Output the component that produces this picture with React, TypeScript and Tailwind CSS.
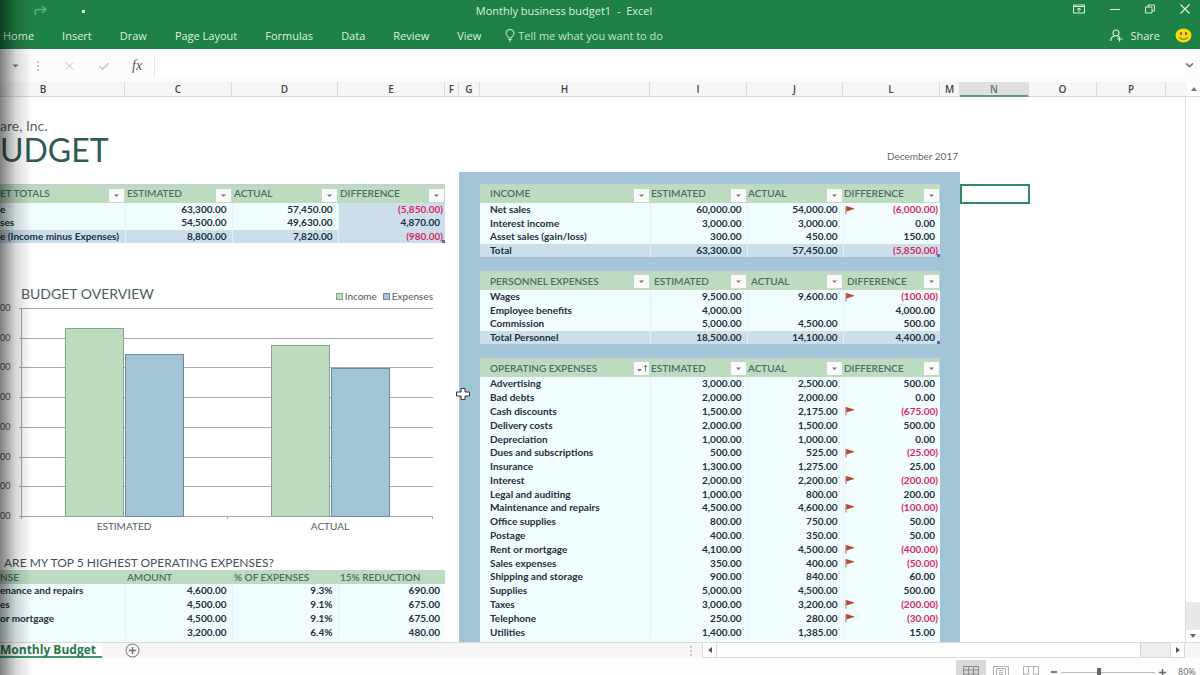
import clsx from "clsx";

type Row = { label: string; cells: string[]; flag?: boolean; total?: boolean };

const tabs = ["Home", "Insert", "Draw", "Page Layout", "Formulas", "Data", "Review", "View"];

const columns = [
    { name: "B", width: "w-[125px] pr-[38px]" },
    { name: "C", width: "w-[107px]" },
    { name: "D", width: "w-[106px]" },
    { name: "E", width: "w-[107px]" },
    { name: "F", width: "w-[14px]" },
    { name: "G", width: "w-[21px]" },
    { name: "H", width: "w-[170px]" },
    { name: "I", width: "w-[97px]" },
    { name: "J", width: "w-[96px]" },
    { name: "L", width: "w-[97px]" },
    { name: "M", width: "w-5" },
    { name: "N", width: "w-[69px]" },
    { name: "O", width: "w-[68px]" },
    { name: "P", width: "w-[69px]" },
];

const totals: Row[] = [
    { label: "e", cells: ["63,300.00", "57,450.00", "(5,850.00)"] },
    { label: "ses", cells: ["54,500.00", "49,630.00", "4,870.00"] },
    { label: "e (Income minus Expenses)", cells: ["8,800.00", "7,820.00", "(980.00)"], total: true },
];

const topExpenses: Row[] = [
    { label: "enance and repairs", cells: ["4,600.00", "9.3%", "690.00"] },
    { label: "es", cells: ["4,500.00", "9.1%", "675.00"] },
    { label: "or mortgage", cells: ["4,500.00", "9.1%", "675.00"] },
    { label: "", cells: ["3,200.00", "6.4%", "480.00"] },
];

const income: Row[] = [
    { label: "Net sales", cells: ["60,000.00", "54,000.00", "(6,000.00)"], flag: true },
    { label: "Interest income", cells: ["3,000.00", "3,000.00", "0.00"] },
    { label: "Asset sales (gain/loss)", cells: ["300.00", "450.00", "150.00"] },
    { label: "Total", cells: ["63,300.00", "57,450.00", "(5,850.00)"], total: true },
];

const personnel: Row[] = [
    { label: "Wages", cells: ["9,500.00", "9,600.00", "(100.00)"], flag: true },
    { label: "Employee benefits", cells: ["4,000.00", "", "4,000.00"] },
    { label: "Commission", cells: ["5,000.00", "4,500.00", "500.00"] },
    { label: "Total Personnel", cells: ["18,500.00", "14,100.00", "4,400.00"], total: true },
];

const operating: Row[] = [
    { label: "Advertising", cells: ["3,000.00", "2,500.00", "500.00"] },
    { label: "Bad debts", cells: ["2,000.00", "2,000.00", "0.00"] },
    { label: "Cash discounts", cells: ["1,500.00", "2,175.00", "(675.00)"], flag: true },
    { label: "Delivery costs", cells: ["2,000.00", "1,500.00", "500.00"] },
    { label: "Depreciation", cells: ["1,000.00", "1,000.00", "0.00"] },
    { label: "Dues and subscriptions", cells: ["500.00", "525.00", "(25.00)"], flag: true },
    { label: "Insurance", cells: ["1,300.00", "1,275.00", "25.00"] },
    { label: "Interest", cells: ["2,000.00", "2,200.00", "(200.00)"], flag: true },
    { label: "Legal and auditing", cells: ["1,000.00", "800.00", "200.00"] },
    { label: "Maintenance and repairs", cells: ["4,500.00", "4,600.00", "(100.00)"], flag: true },
    { label: "Office supplies", cells: ["800.00", "750.00", "50.00"] },
    { label: "Postage", cells: ["400.00", "350.00", "50.00"] },
    { label: "Rent or mortgage", cells: ["4,100.00", "4,500.00", "(400.00)"], flag: true },
    { label: "Sales expenses", cells: ["350.00", "400.00", "(50.00)"], flag: true },
    { label: "Shipping and storage", cells: ["900.00", "840.00", "60.00"] },
    { label: "Supplies", cells: ["5,000.00", "4,500.00", "500.00"] },
    { label: "Taxes", cells: ["3,000.00", "3,200.00", "(200.00)"], flag: true },
    { label: "Telephone", cells: ["250.00", "280.00", "(30.00)"], flag: true },
    { label: "Utilities", cells: ["1,400.00", "1,385.00", "15.00"] },
];

function Flag() {
    return (
        <svg viewBox="0 0 10 10" className="h-[10px] w-[10px]" aria-hidden="true">
            <path d="M1 1v8.5" stroke="#8a8a90" strokeWidth="1.2" />
            <path d="M1.4 1l8 2.8-8 2.8z" fill="#d8352f" />
            <path d="M6 2.6l3.4 1.2L6 5z" fill="#6b7a2e" />
        </svg>
    );
}

function FilterButton({ name, sorted }: { name: string; sorted?: boolean }) {
    return (
        <button type="button" aria-label={`Filter ${name}`} className="mr-px flex h-[13px] w-[15px] shrink-0 items-center justify-center bg-[#fafafc]">
            <svg viewBox="0 0 15 13" className="h-[13px] w-[15px]" aria-hidden="true">
                {sorted ? (
                    <>
                        <path d="M3 7h5L5.500 9.500z" fill="#777" />
                        <path d="M11.500 9.500V3.500M10 5l1.500-1.700L13 5" stroke="#777" fill="none" />
                    </>
                ) : (
                    <path d="M5 5.500h5L7.500 8z" fill="#777" />
                )}
            </svg>
        </button>
    );
}

type TableProps = {
    head: string[];
    rows: Row[];
    left?: boolean;
    filters?: boolean;
    sorted?: boolean;
    inset?: boolean;
    lowHead?: boolean;
    shadeLast?: boolean;
    handle?: boolean;
    className?: string;
};

function BudgetTable({ head, rows, left, filters = true, sorted, inset, lowHead, shadeLast, handle, className }: TableProps) {
    return (
        <div className="relative">
            <table className={clsx("w-full table-fixed border-collapse text-[10px] leading-[13px] text-[#20303c]", className)}>
                <colgroup>
                    <col className={left ? "w-[125px]" : "w-[170px]"} />
                    <col className={left ? "w-[107px]" : "w-[97px]"} />
                    <col className={left ? "w-[106px]" : "w-[96px]"} />
                    <col className={left ? "w-[107px]" : "w-[97px]"} />
                </colgroup>
                <thead>
                    <tr className={clsx("bg-[#bddbbe] text-[#4d6e66]", filters ? "h-[18px]" : "h-[14px]")}>
                        {head.map((name, i) => (
                            <th
                                key={name}
                                scope="col"
                                className={clsx("p-0 text-left font-semibold", filters && "border-t-2 border-t-[#c3d3c6]")}
                            >
                                <div
                                    className={clsx(
                                        "flex justify-between",
                                        lowHead ? "items-end" : "items-start",
                                        i === 0 ? !left && "pl-[10px]" : inset ? "pl-1" : left ? "pl-0.5" : "pl-px",
                                    )}
                                >
                                    <span className="whitespace-nowrap">{name}</span>
                                    {filters && (
                                        <span className={clsx("flex", !lowHead && "pt-0.5")}>
                                            <FilterButton name={name} sorted={sorted && i === 0} />
                                        </span>
                                    )}
                                </div>
                            </th>
                        ))}
                    </tr>
                </thead>
                <tbody>
                    {rows.map((row) => (
                        <tr key={row.label} className={row.total ? "bg-[#cbdeea]" : "bg-[#f1fcff]"}>
                            <th scope="row" className={clsx("whitespace-nowrap p-0 text-left font-bold", !left && "pl-[10px]")}>
                                {row.label}
                            </th>
                            {row.cells.map((cell, i) => {
                                const negative = cell.startsWith("(");
                                return (
                                    <td
                                        key={i}
                                        className={clsx(
                                            "border-l border-l-[#e4f1f6] py-0 pl-px font-bold",
                                            negative ? "pr-0.5 text-[#d8275f]" : "pr-[5px]",
                                            shadeLast && i === 2 && "bg-[#cbdeea]",
                                        )}
                                    >
                                        <div className="flex items-center justify-between">
                                            <span>{row.flag && i === 2 && <Flag />}</span>
                                            <span>{cell}</span>
                                        </div>
                                    </td>
                                );
                            })}
                        </tr>
                    ))}
                </tbody>
            </table>
            {handle && <span className="absolute bottom-0 right-0 h-[3px] w-[3px] bg-[#6a62ae]" />}
        </div>
    );
}

// y positions are measured from the top grid line
const bars = [
    { x: 47, y: 20, fill: "#bddbbe", stroke: "#86a58c" },
    { x: 107, y: 46, fill: "#a2c4d7", stroke: "#6d8898" },
    { x: 253, y: 37, fill: "#bddbbe", stroke: "#86a58c" },
    { x: 313, y: 60, fill: "#a2c4d7", stroke: "#6d8898" },
];
const gridLines = [0, 30, 59, 89, 119, 149, 178, 208];

function Chart() {
    return (
        <section aria-label="Budget overview" className="text-[#4f5b60]">
            <div className="flex items-end justify-between pl-[21px] pr-3">
                <h2 className="text-[14px] leading-4 text-[#47605e]">BUDGET OVERVIEW</h2>
                <div className="flex gap-1.5 text-[10px] leading-3">
                    <span className="flex items-center gap-0.5">
                        <i className="h-[7px] w-[7px] border border-[#86a58c] bg-[#bddbbe]" />
                        Income
                    </span>
                    <span className="flex items-center gap-0.5">
                        <i className="h-[7px] w-[7px] border border-[#6d8898] bg-[#a2c4d7]" />
                        Expenses
                    </span>
                </div>
            </div>
            <div className="flex pt-px">
                <div className="flex h-[218px] w-[18px] flex-col justify-between text-[9px] leading-[10px]">
                    {gridLines.map((y) => (
                        <span key={y}>00</span>
                    ))}
                </div>
                <svg viewBox="0 0 416 218" className="h-[218px] w-[416px]" aria-hidden="true">
                    <g transform="translate(0 5)" shapeRendering="crispEdges">
                        {gridLines.map((y) => (
                            <path key={y} d={`M1 ${y + 0.5}H415`} stroke="#a5a7a9" />
                        ))}
                        <path d="M3.500 0V211M209.500 208v3M414.500 208v3" stroke="#a5a7a9" />
                        {bars.map((bar) => (
                            <rect key={bar.x} x={bar.x + 0.5} y={bar.y + 0.5} width="58" height={208 - bar.y} fill={bar.fill} stroke={bar.stroke} />
                        ))}
                    </g>
                </svg>
            </div>
            <div className="ml-[21px] grid w-[412px] grid-cols-2 text-center text-[10px] leading-[10px]">
                <span>ESTIMATED</span>
                <span>ACTUAL</span>
            </div>
        </section>
    );
}

function TitleBar() {
    return (
        <header className="shrink-0 bg-[#1e8145] font-['Open_Sans',sans-serif] text-[#dcefe2]">
            <div className="grid h-[22px] grid-cols-[1fr_auto_1fr] items-center">
                <div className="flex items-center gap-[35px] pl-[33px]">
                    <button type="button" aria-label="Redo">
                        <svg viewBox="0 0 14 12" className="h-3 w-3.5 opacity-40" fill="none" stroke="currentColor" strokeWidth="1.500">
                            <path d="M9 1l4 3.500L9 8M12.500 4.500H5C2 4.500 1 7 3 10" />
                        </svg>
                    </button>
                    <button type="button" aria-label="Customize toolbar" className="h-[3px] w-[3px] bg-[#cfe8d8]" />
                </div>
                <h1 className="whitespace-pre pr-[72px] text-[11px] font-medium leading-[22px]">Monthly business budget1  -  Excel</h1>
                <div className="flex items-center justify-end gap-[25px] pb-1 pr-[10px]">
                    <button type="button" aria-label="Ribbon display options">
                        <svg viewBox="0 0 12 10" className="h-2.5 w-3" fill="none" stroke="currentColor">
                            <path d="M.5 1h11v8H.5zM.5 2.500h11M6 8V4M4 5.800L6 4l2 1.800" />
                        </svg>
                    </button>
                    <button type="button" aria-label="Minimize">
                        <svg viewBox="0 0 10 10" className="h-2.5 w-2.5" stroke="currentColor">
                            <path d="M0 5.500h10" />
                        </svg>
                    </button>
                    <button type="button" aria-label="Restore">
                        <svg viewBox="0 0 10 10" className="h-2.5 w-2.5" fill="none" stroke="currentColor">
                            <path d="M.5 3h6.500v6H.5zM3 3V1h6.500v6H7" />
                        </svg>
                    </button>
                    <button type="button" aria-label="Close">
                        <svg viewBox="0 0 10 10" className="h-2.5 w-2.5" stroke="currentColor" strokeWidth="1.200">
                            <path d="M.5.5l9 9M9.500.5l-9 9" />
                        </svg>
                    </button>
                </div>
            </div>
            <nav aria-label="Ribbon" className="flex h-[27px] items-center text-[11px] font-medium leading-4">
                <div className="flex gap-7 pl-[3px]">
                    {tabs.map((tab) => (
                        <button key={tab} type="button" className="whitespace-nowrap">
                            {tab}
                        </button>
                    ))}
                </div>
                <label className="flex flex-1 items-center gap-[3px] pl-6">
                    <svg viewBox="0 0 10 13" className="h-[13px] w-2.5 shrink-0" fill="none" stroke="currentColor">
                        <path d="M3.500 9C3.500 7.500 1 6.500 1 4a4 3.500 0 0 1 8 0c0 2.500-2.500 3.500-2.500 5zM3.500 10.500h3M4 12h2" />
                    </svg>
                    <input
                        aria-label="Tell me"
                        placeholder="Tell me what you want to do"
                        className="w-full bg-transparent outline-none placeholder:text-[#c3e2ce]"
                    />
                </label>
                <button type="button" className="flex items-center gap-[7px]">
                    <svg viewBox="0 0 13 13" className="h-[13px] w-[13px]" fill="none" stroke="currentColor" strokeWidth="1.200">
                        <circle cx="6" cy="4" r="3" />
                        <path d="M.8 12c0-2.500 1.500-4.500 3.700-5M7.500 7l1.500 1M9.500 7.500v5M7 10h5.500" />
                    </svg>
                    Share
                </button>
                <button type="button" aria-label="Feedback" className="ml-[15px] mr-2">
                    <svg viewBox="0 0 17 15" className="h-[15px] w-[17px]">
                        <ellipse cx="8.500" cy="7.500" rx="8" ry="7" fill="#f9d914" />
                        <ellipse cx="6" cy="5.500" rx=".9" ry="1.500" fill="#5b4a0c" />
                        <ellipse cx="11" cy="5.500" rx=".9" ry="1.500" fill="#5b4a0c" />
                        <path d="M4 9c1.500 3 7.500 3 9 0" fill="none" stroke="#7a5d0b" />
                    </svg>
                </button>
            </nav>
        </header>
    );
}

function FormulaBar() {
    return (
        <div className="flex h-[33px] shrink-0 items-center bg-[#fcfcfd] text-[#c4c4c4]">
            <button type="button" aria-label="Name box" className="ml-3">
                <svg viewBox="0 0 7 4" className="h-1 w-[7px]">
                    <path d="M.5.500h6L3.500 3.500z" fill="#777" />
                </svg>
            </button>
            <span className="ml-[18px] flex flex-col gap-0.5">
                <i className="h-0.5 w-0.5 bg-[#c4c4c4]" />
                <i className="h-0.5 w-0.5 bg-[#c4c4c4]" />
                <i className="h-0.5 w-0.5 bg-[#c4c4c4]" />
            </span>
            <button type="button" aria-label="Cancel" className="ml-[26px]">
                <svg viewBox="0 0 9 8" className="h-2 w-[9px]" stroke="currentColor">
                    <path d="M.5.500l8 7M8.500.500l-8 7" />
                </svg>
            </button>
            <button type="button" aria-label="Enter" className="ml-6">
                <svg viewBox="0 0 12 8" className="h-2 w-3" fill="none" stroke="currentColor" strokeWidth="1.400">
                    <path d="M1 4l3.500 3L11 1" />
                </svg>
            </button>
            <button type="button" className="ml-[22px] font-['Liberation_Serif',serif] text-[14px] italic leading-4 text-[#555]">
                fx
            </button>
            <input aria-label="Formula" className="ml-3 h-5 flex-1 border-l border-[#e4e4e6] bg-white outline-none" />
            <button type="button" aria-label="Expand formula bar" className="mr-1.5">
                <svg viewBox="0 0 9 5" className="h-[5px] w-[9px]" fill="none" stroke="#666" strokeWidth="1.500">
                    <path d="M1 .5l3.500 3 3.500-3" />
                </svg>
            </button>
        </div>
    );
}

function Footer() {
    return (
        <footer className="shrink-0">
            <div className="flex h-4 items-stretch border-t border-[#d5dcdf] bg-[#f6f6f7]">
                <button type="button" className="w-[102px] whitespace-nowrap border-b-2 border-[#3a9b68] bg-white text-left font-['Open_Sans',sans-serif] text-[12px] font-bold leading-[14px] text-[#217a4b]">
                    Monthly Budget
                </button>
                <button type="button" aria-label="New sheet" className="ml-[23px] flex items-center">
                    <svg viewBox="0 0 15 15" className="h-[15px] w-[15px]" fill="none" stroke="#777">
                        <circle cx="7.500" cy="7.500" r="6.500" />
                        <path d="M7.500 4v7M4 7.500h7" strokeWidth="1.500" />
                    </svg>
                </button>
                <span className="ml-auto mr-2.5 flex flex-col justify-center gap-0.5">
                    <i className="h-0.5 w-0.5 bg-[#c4c4c4]" />
                    <i className="h-0.5 w-0.5 bg-[#c4c4c4]" />
                    <i className="h-0.5 w-0.5 bg-[#c4c4c4]" />
                </span>
                <div className="mr-[15px] flex w-[483px] border-b border-[#dadada] bg-[#ededed]">
                    <button type="button" aria-label="Scroll left" className="flex w-[15px] items-center justify-center border-x border-[#dadada] bg-white">
                        <svg viewBox="0 0 4 6" className="h-1.5 w-1">
                            <path d="M4 0v6L0 3z" fill="#555" />
                        </svg>
                    </button>
                    <div className="flex-1 border-r border-[#d0d0d0] bg-white" />
                    <div className="w-[29px]" />
                    <button type="button" aria-label="Scroll right" className="flex w-[15px] items-center justify-center border-x border-[#dadada] bg-white">
                        <svg viewBox="0 0 4 6" className="h-1.5 w-1">
                            <path d="M0 0v6l4-3z" fill="#555" />
                        </svg>
                    </button>
                </div>
            </div>
            <div className="h-[17px] overflow-hidden bg-[#fdfdfd] pt-0.5">
                <div className="flex h-6 items-center justify-end text-[#666]">
                    <button type="button" aria-label="Normal view" className="flex h-6 w-[30px] items-center justify-center bg-[#d9d9d9]">
                        <svg viewBox="0 0 16 12" className="h-3 w-4" fill="none" stroke="#8c8c8c">
                            <path d="M.5.5h15v11H.5zM.5 4h15M.5 8h15M5.500.5v11M10.500.5v11" />
                        </svg>
                    </button>
                    <button type="button" aria-label="Page layout view" className="flex h-6 w-[30px] items-center justify-center">
                        <svg viewBox="0 0 16 12" className="h-3 w-4" fill="none" stroke="#b0b0b0">
                            <path d="M.5.5h15v11H.5zM3.500 12V2.500h9V12M6 4.500h4M6 6.500h4M6 8.500h4" />
                        </svg>
                    </button>
                    <button type="button" aria-label="Page break view" className="flex h-6 w-[30px] items-center justify-center">
                        <svg viewBox="0 0 16 12" className="h-3 w-4" fill="none" stroke="#b0b0b0">
                            <path d="M.5 12V.5h15V12M5.500.5V8H.5M10.500.5V8h5" />
                        </svg>
                    </button>
                    <button type="button" aria-label="Zoom out" className="ml-[5px] h-0.5 w-1.5 bg-[#777]" />
                    <input
                        type="range"
                        aria-label="Zoom"
                        min={0}
                        max={200}
                        defaultValue={80}
                        className="mx-1 h-2.5 w-[94px] appearance-none bg-transparent [&::-webkit-slider-runnable-track]:h-px [&::-webkit-slider-runnable-track]:bg-[#bbb] [&::-webkit-slider-thumb]:-mt-1 [&::-webkit-slider-thumb]:h-2.5 [&::-webkit-slider-thumb]:w-1 [&::-webkit-slider-thumb]:appearance-none [&::-webkit-slider-thumb]:bg-[#666]"
                    />
                    <button type="button" aria-label="Zoom in">
                        <svg viewBox="0 0 7 7" className="h-[7px] w-[7px]" stroke="#666" strokeWidth="1.500">
                            <path d="M3.500 0v7M0 3.500h7" />
                        </svg>
                    </button>
                    <span className="ml-3 mr-1 w-[18px] font-['Open_Sans',sans-serif] text-[9px] leading-3">80%</span>
                </div>
            </div>
        </footer>
    );
}

export default function App() {
    return (
        <div className="relative flex h-screen flex-col overflow-hidden bg-white font-['Lato',sans-serif]">
            <TitleBar />
            <FormulaBar />
            <div className="flex h-[15px] shrink-0 border-b border-[#d9d9d9] bg-[#f7f6f7] font-['Open_Sans',sans-serif] text-[10px] font-semibold leading-[14px] text-[#444]">
                {columns.map((column) => (
                    <div
                        key={column.name}
                        className={clsx(
                            "h-[15px] shrink-0 border-r border-[#dcdcdc] text-center",
                            column.name === "N" && "border-b-2 border-b-[#5a9f78] bg-[#dfdfdf] text-[#5c7567]",
                            column.width,
                        )}
                    >
                        {column.name}
                    </div>
                ))}
                <button type="button" aria-label="Scroll up" className="ml-auto flex w-[13px] items-center justify-center bg-white">
                    <svg viewBox="0 0 6 4" className="h-1 w-1.5">
                        <path d="M0 4h6L3 0z" fill="#777" />
                    </svg>
                </button>
            </div>

            <div className="flex min-h-0 flex-1">
                <main className="flex min-w-0 flex-1 overflow-hidden">
                    <div className="flex w-[445px] shrink-0 flex-col pt-[21px]">
                        <p className="text-[14px] leading-4 text-[#5b6668]">are, Inc.</p>
                        <p className="text-[32px] leading-8 text-[#2e5a58]">UDGET</p>
                        <div className="pt-[18px]">
                            <BudgetTable left shadeLast handle head={["ET TOTALS", "ESTIMATED", "ACTUAL", "DIFFERENCE"]} rows={totals} className="h-[59px]" />
                        </div>
                        <div className="pt-[43px]">
                            <Chart />
                        </div>
                        <h2 className="mt-[26px] whitespace-nowrap pl-1 text-[12px] leading-[12px] text-[#3f5352]">ARE MY TOP 5 HIGHEST OPERATING EXPENSES?</h2>
                        <div className="mt-px flex-1 bg-[#f1fcff]">
                            <BudgetTable left filters={false} head={["NSE", "AMOUNT", "% OF EXPENSES", "15% REDUCTION"]} rows={topExpenses} className="h-[69px]" />
                        </div>
                    </div>
                    <div className="ml-[14px] flex w-[501px] shrink-0 flex-col">
                        <p className="pt-[52px] pr-0.5 text-right text-[10px] leading-[14px] text-[#5f6b6e]">December 2017</p>
                        <div className="mt-[9px] flex flex-1 flex-col gap-[14px] bg-[#a2c4d7] pl-[21px] pr-5 pt-3">
                            <BudgetTable handle head={["INCOME", "ESTIMATED", "ACTUAL", "DIFFERENCE"]} rows={income} className="h-[73px]" />
                            <BudgetTable handle inset lowHead head={["PERSONNEL EXPENSES", "ESTIMATED", "ACTUAL", "DIFFERENCE"]} rows={personnel} className="h-[73px]" />
                            <div className="flex-1 bg-[#f1fcff]">
                                <BudgetTable sorted lowHead head={["OPERATING EXPENSES", "ESTIMATED", "ACTUAL", "DIFFERENCE"]} rows={operating} className="h-[281px]" />
                            </div>
                        </div>
                    </div>
                    <div className="mt-[87px] h-5 w-[70px] shrink-0 border-2 border-[#2f8a5c]" />
                </main>
                <div className="flex w-[15px] shrink-0 flex-col border-l border-[#dcdcdc] bg-white">
                    <div className="mt-auto h-7 bg-[#e8e8e8]" />
                    <button type="button" aria-label="Scroll down" className="flex h-3 items-center justify-center">
                        <svg viewBox="0 0 6 4" className="h-1 w-1.5">
                            <path d="M0 0h6L3 4z" fill="#666" />
                        </svg>
                    </button>
                </div>
            </div>
            <Footer />

            <svg viewBox="0 0 16 14" className="pointer-events-none absolute left-[455px] top-[387px] h-3.5 w-4" aria-hidden="true">
                <path d="M6 1.500h4v3.500h4.500v4H10v3.500H6V9H1.500V5H6z" fill="#fff" stroke="#333" />
            </svg>
            <div className="pointer-events-none absolute inset-y-0 left-0 w-8 bg-gradient-to-r from-black/50 via-black/15 to-transparent" />
        </div>
    );
}
